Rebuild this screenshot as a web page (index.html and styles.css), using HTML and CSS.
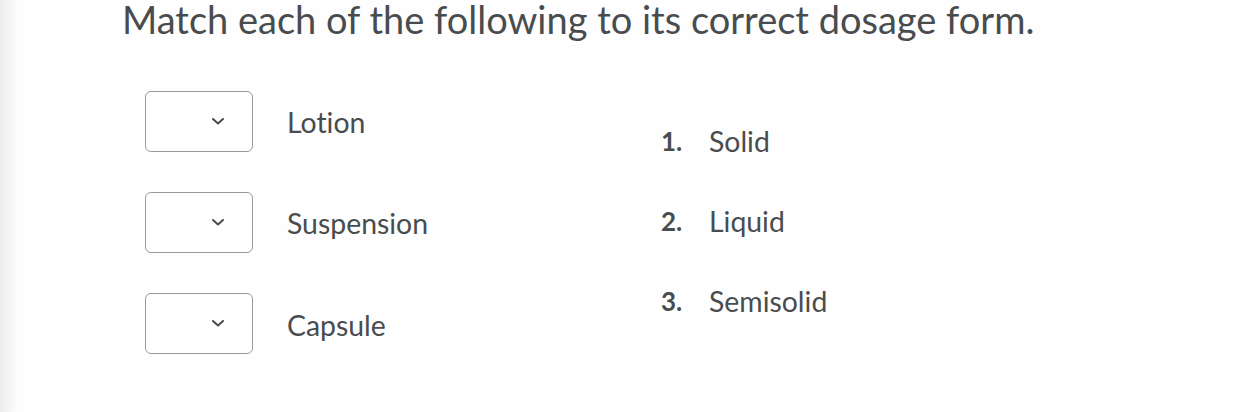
FILE: index.html
```html
<!DOCTYPE html>
<html>
<head>
<meta charset="utf-8">
<link rel="stylesheet" href="styles.css">
</head>
<body>
<div class="edge"></div>
<main class="page">
  <h1 class="title">Match each of the following to its correct dosage form.</h1>
  <div class="match">
    <div class="left">
      <div class="row">
        <div class="select"><svg class="chev" viewBox="0 0 12 7" width="12" height="7"><path d="M1 1 L6 5.5 L11 1" fill="none" stroke="#494c4e" stroke-width="2" stroke-linecap="round" stroke-linejoin="round"/></svg></div>
        <span class="label">Lotion</span>
      </div>
      <div class="row">
        <div class="select"><svg class="chev" viewBox="0 0 12 7" width="12" height="7"><path d="M1 1 L6 5.5 L11 1" fill="none" stroke="#494c4e" stroke-width="2" stroke-linecap="round" stroke-linejoin="round"/></svg></div>
        <span class="label">Suspension</span>
      </div>
      <div class="row">
        <div class="select"><svg class="chev" viewBox="0 0 12 7" width="12" height="7"><path d="M1 1 L6 5.5 L11 1" fill="none" stroke="#494c4e" stroke-width="2" stroke-linecap="round" stroke-linejoin="round"/></svg></div>
        <span class="label label-low">Capsule</span>
      </div>
    </div>
    <ol class="right">
      <li><span class="num">1.</span><span>Solid</span></li>
      <li><span class="num">2.</span><span>Liquid</span></li>
      <li><span class="num">3.</span><span>Semisolid</span></li>
    </ol>
  </div>
</main>
</body>
</html>
```
FILE: styles.css
```css
html, body {
  margin: 0;
  padding: 0;
  background: #fefefe;
}
body {
  font-family: Lato, "Open Sans", sans-serif;
  font-variant-ligatures: none;
  color: #494c4e;
  width: 1238px;
  height: 412px;
  overflow: hidden;
  display: flex;
}
.edge {
  width: 18px;
  flex: none;
  background: linear-gradient(to right, #ececec, #f6f6f6 60%, #fefefe);
}
.page {
  padding-left: 104px;
}
.title {
  margin: 0;
  font-weight: 400;
  font-size: 38px;
  line-height: 38px;
}
.match {
  display: flex;
  margin-top: 53px;
}
.left {
  display: flex;
  flex-direction: column;
  gap: 40px;
  padding-left: 23px;
  width: 516px;
}
.row {
  display: flex;
  align-items: center;
  height: 61px;
}
.select {
  width: 108px;
  height: 61px;
  border: 1.5px solid #9a9a9a;
  border-radius: 6px;
  background: #fff;
  display: flex;
  align-items: center;
  justify-content: flex-end;
  padding-right: 28px;
  box-sizing: border-box;
}
.chev {
  display: block;
}
.label {
  font-size: 28.4px;
  margin-left: 34px;
}
.label-low {
  margin-top: 3px;
}
.right {
  list-style: none;
  margin: 0;
  padding: 0;
  padding-top: 10px;
}
.right li {
  height: 80px;
  display: flex;
  align-items: center;
  font-size: 28.4px;
}
.num {
  width: 48px;
  font-weight: 700;
  font-size: 26px;
}
```
